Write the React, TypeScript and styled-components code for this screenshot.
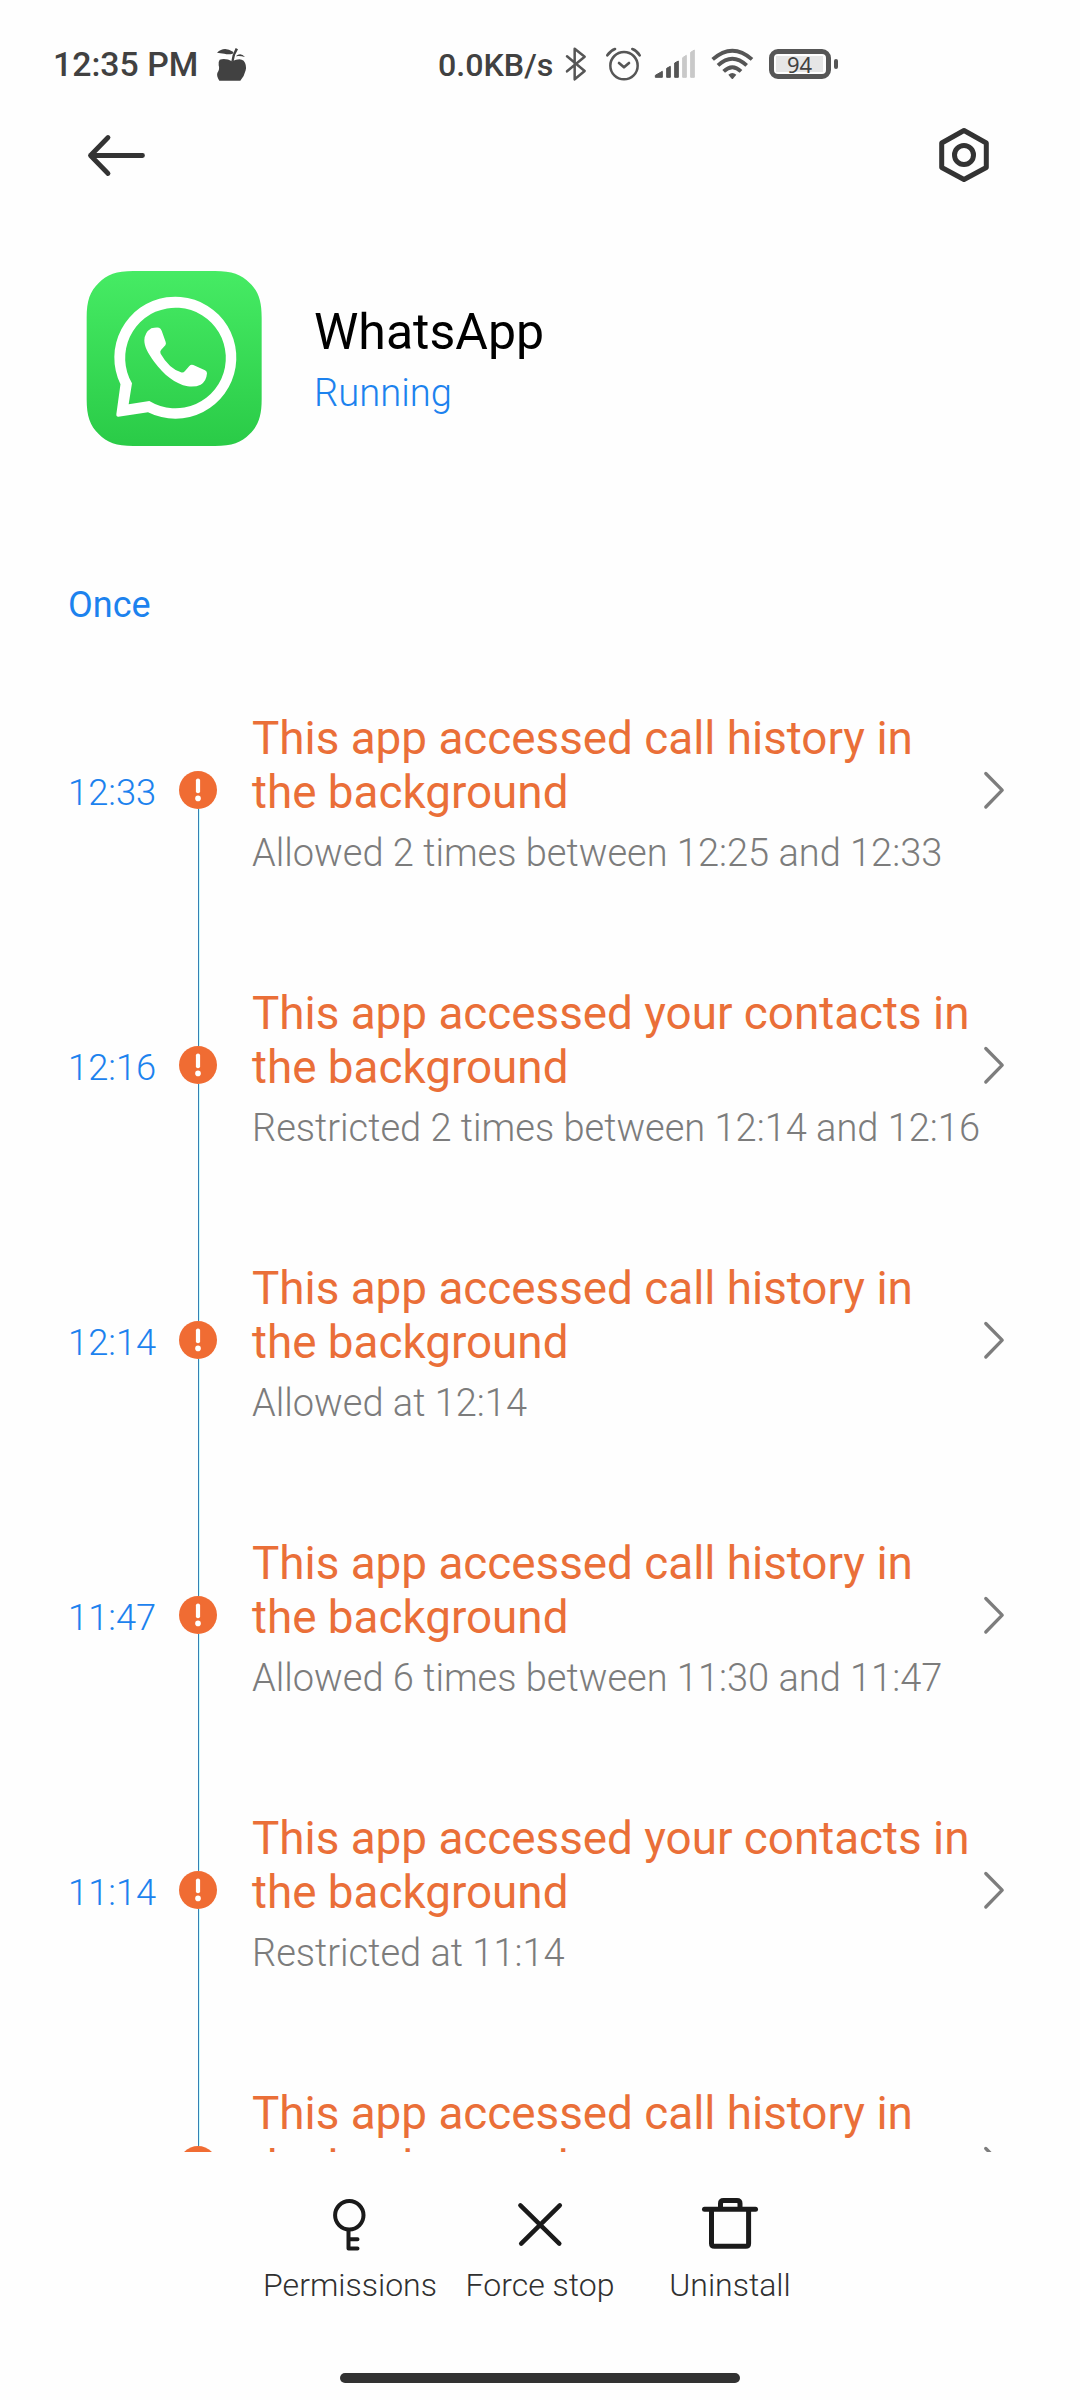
import React from "react";
import styled, { createGlobalStyle } from "styled-components";

const GlobalStyle = createGlobalStyle`
  html, body { margin: 0; padding: 0; background: #fefefe; }
  * { box-sizing: border-box; }
  svg { display: block; overflow: visible; flex: none; }
`;

const BLUE = "#1c82ee";
const ORANGE = "#ea6f38";

const Screen = styled.div`
  width: 1080px;
  height: 2400px;
  display: flex;
  flex-direction: column;
  overflow: hidden;
  background: #fefefe;
  font-family: Roboto, "Noto Sans", sans-serif;
`;

const StatusBar = styled.header`
  display: flex;
  align-items: center;
  height: 85px;
  padding: 45px 0 0 53px;
  line-height: 40px;
  color: #414141;
  flex: none;
`;
const Clock = styled.span`
  width: 162px;
  font-size: 33.8px;
  font-weight: 480;
  white-space: nowrap;
`;
const Network = styled.span`
  width: 118px;
  margin-left: 188px;
  font-size: 32.2px;
  font-weight: 470;
  white-space: nowrap;
`;
const Battery = styled.div`
  display: flex;
  align-items: center;
  gap: 3px;
  margin: -2px 0 0 5px;
`;
const BatteryBody = styled.div`
  width: 62px;
  height: 30px;
  padding: 2px;
  border: 5px solid #565656;
  border-radius: 9px;
`;
const BatteryLevel = styled.div`
  width: 47px;
  height: 16px;
  background: #e6e6e6;
  color: #414141;
  font: 400 22px/16px "Noto Sans", sans-serif;
  text-align: center;
`;
const BatteryTip = styled.div`
  width: 4px;
  height: 10px;
  border-radius: 2px;
  background: #565656;
`;

const AppBar = styled.nav`
  display: flex;
  justify-content: space-between;
  align-items: center;
  height: 140px;
  padding: 0 90px 0 86px;
  flex: none;
`;

const AppHeader = styled.section`
  display: flex;
  align-items: flex-start;
  height: 312px;
  padding: 46px 0 0 86px;
  flex: none;
`;
const AppTitles = styled.div`
  display: flex;
  flex-direction: column;
  padding: 31px 0 0 52px;
`;
const AppName = styled.h1`
  margin: 0;
  font-size: 50px;
  line-height: 60px;
  font-weight: 400;
  color: #000;
`;
const AppState = styled.span`
  font-size: 38.2px;
  line-height: 50px;
  margin-top: 6px;
  font-weight: 340;
  color: ${BLUE};
`;

const SectionLabel = styled.h2`
  margin: 0;
  height: 115px;
  padding: 43px 0 0 68px;
  font-size: 36px;
  line-height: 50px;
  font-weight: 400;
  color: ${BLUE};
  flex: none;
`;

const Timeline = styled.main`
  height: 1500px;
  overflow: hidden;
  flex: none;
`;
const Row = styled.article`
  display: grid;
  grid-template-columns: 111px 38px 767px 20px;
  align-items: center;
  height: 275px;
  padding-left: 68px;
`;
const Time = styled.time`
  padding-top: 7px;
  font-size: 36.3px;
  line-height: 50px;
  font-weight: 340;
  color: ${BLUE};
`;
const Rail = styled.div`
  display: flex;
  flex-direction: column;
  align-items: center;
  height: 275px;
`;
const RailLine = styled.div<{ $height: number; $hidden?: boolean }>`
  width: 1px;
  height: ${(p) => p.$height}px;
  margin-left: 1px;
  background: ${(p) => (p.$hidden ? "transparent" : "#3580b4")};
  box-shadow: ${(p) => (p.$hidden ? "none" : "1px 0 0 #c8ffff")};
`;
const Event = styled.div`
  padding: 11px 0 0 35px;
`;
const EventTitle = styled.h3`
  margin: 0;
  max-width: 722px;
  font-size: 45.8px;
  line-height: 54px;
  font-weight: 400;
  color: ${ORANGE};
`;
const EventDetail = styled.p`
  margin: 8px 0 0;
  font-size: 38px;
  line-height: 50px;
  font-weight: 335;
  color: #7c7c7c;
  white-space: nowrap;
`;

const Actions = styled.footer`
  display: flex;
  justify-content: center;
  height: 221px;
  padding-top: 42px;
  flex: none;
`;
const Action = styled.button`
  display: flex;
  flex-direction: column;
  align-items: center;
  width: 190px;
  padding: 0;
  border: 0;
  background: none;
  font-family: inherit;
`;
const ActionLabel = styled.span`
  margin-top: 11px;
  font-size: 32px;
  line-height: 40px;
  font-weight: 310;
  color: #303030;
  white-space: nowrap;
`;
const HomeIndicator = styled.div`
  width: 400px;
  height: 10px;
  margin: 0 auto;
  border-radius: 5px;
  background: #323232;
  flex: none;
`;

const AppleIcon = () => (
  <svg width="35" height="36" viewBox="555 51 105 108" fill="#414141">
    <path d="M569 89Q588 84 606 94Q630 82 641 92Q651 105 647 121Q643 139 631 152H568Q559 139 562 129Q570 118 566 106Q564 96 569 89Z" />
    <path d="M561 68Q582 48 609 65Q612 68 608 71Q596 75 583 71Q571 70 561 68Z" />
    <path d="M604 94Q606 74 617 54L624 58Q612 76 611 94Z" />
    <path d="M617 79Q632 66 645 81Q630 77 617 79Z" />
  </svg>
);

const BluetoothIcon = () => (
  <svg width="40" height="36" viewBox="408 51 120 108" fill="none" stroke="#565656" strokeWidth="7.5" strokeLinejoin="round" strokeLinecap="round">
    <path d="M441 79L494 123L464 148V56L494 80L441 124" />
  </svg>
);

const AlarmIcon = () => (
  <svg width="52" height="36" viewBox="528 51 156 108" fill="none" stroke="#565656" strokeWidth="8" strokeLinecap="round" strokeLinejoin="round">
    <circle cx="612" cy="107" r="41" strokeWidth="7.5" />
    <path d="M597 99L612 112L627 99" />
    <path d="M562 76Q571 62 585 57M659 76Q651 62 637 57" />
  </svg>
);

const SignalIcon = () => (
  <svg width="55" height="36" viewBox="684 51 165 108" fill="#565656" stroke="#565656" strokeWidth="3" strokeLinejoin="round">
    <path d="M706 142V136L727 124V142Z" />
    <path d="M740 142V115L751 109V142Z" />
    <path d="M764 142V99L775 93V142Z" />
    <g fill="#c9c9c9" stroke="#c9c9c9">
      <path d="M788 142V83L799 76V142Z" />
      <path d="M812 142V67L823 60V142Z" />
    </g>
  </svg>
);

const WifiIcon = () => (
  <svg width="61" height="36" viewBox="849 51 183 108" fill="none" stroke="#565656" strokeWidth="11.5">
    <path d="M878 88Q937 36 996 88" />
    <path d="M894 106Q937 66 980 106" />
    <path d="M911 124Q937 99 963 124" />
    <path d="M925 134Q937 124 949 134L939 146Q937 148 935 146Z" fill="#565656" stroke="none" />
  </svg>
);

const BackIcon = () => (
  <svg width="60" height="42" viewBox="0 0 60 42" fill="none" stroke="#333" strokeWidth="4.8" strokeLinecap="round" strokeLinejoin="round">
    <path d="M22 3.5L4.5 21.5L22 39.5M4.5 21.5H56.5" />
  </svg>
);

const SettingsIcon = () => (
  <svg width="52" height="56" viewBox="0 0 52 56" fill="none" stroke="#333" strokeWidth="5" strokeLinejoin="round">
    <path d="M26 3.5L48.3 16V40.5L26 52.5L3.7 40.5V16Z" />
    <circle cx="26" cy="28" r="9.5" />
  </svg>
);

const WhatsAppIcon = () => (
  <svg width="176" height="175" viewBox="77 64 528 525">
    <defs>
      <linearGradient id="wa" x1="0" y1="0" x2="0" y2="1">
        <stop offset="0" stopColor="#46eb64" />
        <stop offset="1" stopColor="#2acb47" />
      </linearGradient>
    </defs>
    <path
      fill="url(#wa)"
      d="M219 64H464C515 64 543 74 568 100C594 125 604 153 604 204V449C604 500 594 528 568 553C543 579 515 589 464 589H219C168 589 140 579 115 553C89 528 79 500 79 449V204C79 153 89 125 115 100C140 74 168 64 219 64Z"
    />
    <path
      fill="#fff"
      fillRule="evenodd"
      d="M180.4 404A183 183 0 1 1 263 487.6L174 501Q167 502 168 494ZM215 401A151 151 0 1 1 267 454L205 464Z"
    />
    <path
      fill="#fff"
      d="M273 236Q285 233 296 234Q301 235 304 243L316 277Q318 283 315 287L302 301Q298 306 301 312Q325 355 362 368Q369 370 374 364L387 349Q392 343 399 346L434 362Q440 365 440 371Q438 396 421 405Q405 413 382 410C345 403 310 375 282 337C261 308 252 290 252 272Q253 248 273 236Z"
    />
  </svg>
);

const AlertBadge = () => (
  <svg width="38" height="38" viewBox="0 0 38 38">
    <circle cx="19" cy="19" r="19" fill="#f06c33" />
    <path d="M19 9.6V20.2" stroke="#fff" strokeWidth="4.2" strokeLinecap="round" />
    <circle cx="19" cy="27.4" r="2.8" fill="#fff" />
  </svg>
);

const Chevron = () => (
  <svg width="20" height="38" viewBox="0 0 20 38" fill="none" stroke="#7d7d7d" strokeWidth="3.3" strokeLinecap="round" strokeLinejoin="round">
    <path d="M1.8 2.5L18.2 19.2L1.8 36" />
  </svg>
);

const KeyIcon = () => (
  <svg width="60" height="60" viewBox="0 0 60 60" fill="none" stroke="#1a1a1a" strokeWidth="4" strokeLinecap="round" strokeLinejoin="round">
    <circle cx="29.3" cy="21.3" r="14.2" />
    <path d="M28.5 36V54.5H37.5M28.5 45.2H37.5" />
  </svg>
);

const CloseIcon = () => (
  <svg width="60" height="60" viewBox="0 0 60 60" fill="none" stroke="#1a1a1a" strokeWidth="4.5" strokeLinecap="round">
    <path d="M10.4 11.4L49.3 49.7M49.8 11.4L11.2 49.7" />
  </svg>
);

const TrashIcon = () => (
  <svg width="60" height="60" viewBox="0 0 60 60" fill="none" stroke="#1a1a1a" strokeWidth="5" strokeLinejoin="round">
    <path d="M4.5 15.3H55.5" strokeLinecap="round" />
    <path d="M20.5 15V9.5Q20.5 6.5 23.5 6.5H37Q40 6.5 40 9.5V15" />
    <path d="M11.5 15V49.5Q11.5 52.3 14.5 52.3H45.8Q48.6 52.3 48.6 49.5V15" />
  </svg>
);

const CALLS = "This app accessed call history in the background";
const CONTACTS = "This app accessed your contacts in the background";

const events = [
  { time: "12:33", title: CALLS, detail: "Allowed 2 times between 12:25 and 12:33" },
  { time: "12:16", title: CONTACTS, detail: "Restricted 2 times between 12:14 and 12:16" },
  { time: "12:14", title: CALLS, detail: "Allowed at 12:14" },
  { time: "11:47", title: CALLS, detail: "Allowed 6 times between 11:30 and 11:47" },
  { time: "11:14", title: CONTACTS, detail: "Restricted at 11:14" },
  { time: "", title: CALLS, detail: "" },
];

const actions = [
  { label: "Permissions", Icon: KeyIcon },
  { label: "Force stop", Icon: CloseIcon },
  { label: "Uninstall", Icon: TrashIcon },
];

export default function App() {
  return (
    <Screen>
      <GlobalStyle />
      <StatusBar>
        <Clock>12:35 PM</Clock>
        <AppleIcon />
        <Network>0.0KB/s</Network>
        <BluetoothIcon />
        <AlarmIcon />
        <SignalIcon />
        <WifiIcon />
        <Battery>
          <BatteryBody>
            <BatteryLevel>94</BatteryLevel>
          </BatteryBody>
          <BatteryTip />
        </Battery>
      </StatusBar>
      <AppBar>
        <BackIcon />
        <SettingsIcon />
      </AppBar>
      <AppHeader>
        <WhatsAppIcon />
        <AppTitles>
          <AppName>WhatsApp</AppName>
          <AppState>Running</AppState>
        </AppTitles>
      </AppHeader>
      <SectionLabel>Once</SectionLabel>
      <Timeline>
        {events.map((e, i) => (
          <Row key={i}>
            <Time>{e.time}</Time>
            <Rail>
              <RailLine $height={119} $hidden={i === 0} />
              <AlertBadge />
              <RailLine $height={118} />
            </Rail>
            <Event>
              <EventTitle>{e.title}</EventTitle>
              <EventDetail>{e.detail || "\u00a0"}</EventDetail>
            </Event>
            <Chevron />
          </Row>
        ))}
      </Timeline>
      <Actions>
        {actions.map(({ label, Icon }) => (
          <Action key={label}>
            <Icon />
            <ActionLabel>{label}</ActionLabel>
          </Action>
        ))}
      </Actions>
      <HomeIndicator />
    </Screen>
  );
}
